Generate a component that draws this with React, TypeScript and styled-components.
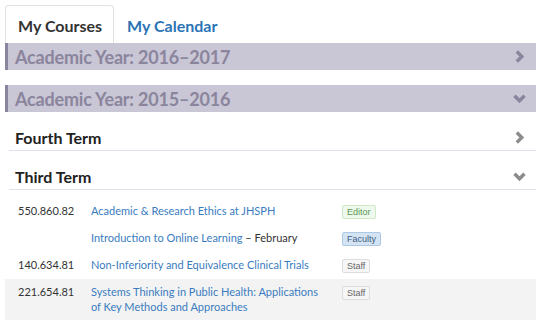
import styled, { createGlobalStyle } from 'styled-components';

const GlobalStyle = createGlobalStyle`
  body {
    margin: 0;
    background: #ffffff;
    font-family: Lato, 'Open Sans', sans-serif;
  }
`;

type Role = 'editor' | 'faculty' | 'staff';

interface Course {
  code?: string;
  title: string;
  note?: string;
  role: Role;
}

const courses: Course[] = [
  { code: '550.860.82', title: 'Academic & Research Ethics at JHSPH', role: 'editor' },
  { title: 'Introduction to Online Learning', note: '– February', role: 'faculty' },
  { code: '140.634.81', title: 'Non-Inferiority and Equivalence Clinical Trials', role: 'staff' },
  {
    code: '221.654.81',
    title: 'Systems Thinking in Public Health: Applications of Key Methods and Approaches',
    role: 'staff',
  },
];

const roleLabel: Record<Role, string> = {
  editor: 'Editor',
  faculty: 'Faculty',
  staff: 'Staff',
};

const Chevron = ({ dir, color }: { dir: 'right' | 'down'; color: string }) => (
  <svg width="13" height="13" viewBox="0 0 13 13">
    {dir === 'right' ? (
      <polyline points="3.8,1.5 8.8,6.5 3.8,11.5" fill="none" stroke={color} strokeWidth="3.4" />
    ) : (
      <polyline points="1.5,3.8 6.5,8.8 11.5,3.8" fill="none" stroke={color} strokeWidth="3.4" />
    )}
  </svg>
);

export default function App() {
  return (
    <>
      <GlobalStyle />
      <Page>
        <Tabs>
          <Tab active>My Courses</Tab>
          <Tab>My Calendar</Tab>
        </Tabs>

        <YearBar>
          <YearTitle>Academic Year: 2016–2017</YearTitle>
          <Chevron dir="right" color="#8a859c" />
        </YearBar>

        <YearBar spaced>
          <YearTitle>Academic Year: 2015–2016</YearTitle>
          <Chevron dir="down" color="#8a859c" />
        </YearBar>

        <TermHeader>
          <TermTitle>Fourth Term</TermTitle>
          <Chevron dir="right" color="#8c8c8c" />
        </TermHeader>

        <TermHeader>
          <TermTitle>Third Term</TermTitle>
          <Chevron dir="down" color="#8c8c8c" />
        </TermHeader>

        <CourseList>
          {courses.map((c, i) => (
            <CourseRow key={i} shaded={i === 3}>
              <Code>{c.code}</Code>
              <Title>
                <CourseLink href="#">{c.title}</CourseLink>
                {c.note ? <Note> {c.note}</Note> : null}
              </Title>
              <div>
                <Badge role={c.role}>{roleLabel[c.role]}</Badge>
              </div>
            </CourseRow>
          ))}
        </CourseList>
      </Page>
    </>
  );
}

const Page = styled.div`
  width: 531px;
  padding: 5px;
`;

const Tabs = styled.div`
  display: flex;
  align-items: flex-end;
  height: 38px;
`;

const Tab = styled.div<{ active?: boolean }>`
  height: 38px;
  box-sizing: border-box;
  display: flex;
  align-items: center;
  padding: 1px 11px 0 12px;
  font-size: 16px;
  font-weight: 700;
  color: ${(p) => (p.active ? '#333333' : '#2a74b5')};
  border: 1px solid ${(p) => (p.active ? '#e2e2e2' : 'transparent')};
  border-bottom: none;
  border-radius: 4px 4px 0 0;
  background: #ffffff;
`;

const YearBar = styled.div<{ spaced?: boolean }>`
  display: flex;
  align-items: center;
  justify-content: space-between;
  height: 27px;
  margin-top: ${(p) => (p.spaced ? '15px' : '0')};
  padding: 0 10px 0 7px;
  background: #c9c6d6;
  border-left: 3px solid #8a859f;
`;

const YearTitle = styled.div`
  font-size: 18px;
  font-weight: 700;
  letter-spacing: -0.2px;
  color: #8a859c;
`;

const TermHeader = styled.div`
  display: flex;
  align-items: center;
  justify-content: space-between;
  height: 26px;
  margin: 12px 0 0 4px;
  padding: 0 10px 0 6px;
  border-bottom: 1px solid #e1e1ec;
`;

const TermTitle = styled.div`
  font-size: 16px;
  font-weight: 700;
  color: #222222;
`;

const CourseList = styled.div`
  margin-top: 8px;
`;

const CourseRow = styled.div<{ shaded?: boolean }>`
  display: grid;
  grid-template-columns: 73px 251px 1fr;
  padding: 5px 0 6px 13px;
  font-size: 11px;
  line-height: 15px;
  background: ${(p) => (p.shaded ? '#f3f3f3' : 'transparent')};
`;

const Code = styled.div`
  color: #333333;
`;

const Title = styled.div`
  padding-right: 12px;
`;

const CourseLink = styled.a`
  color: #3a7cc0;
  text-decoration: none;
`;

const Note = styled.span`
  color: #333333;
`;

const badgeColors: Record<Role, { bg: string; border: string; text: string }> = {
  editor: { bg: '#eef8ec', border: '#cfe8c8', text: '#5b9a52' },
  faculty: { bg: '#d5e4f3', border: '#adc9e6', text: '#3e5d85' },
  staff: { bg: '#f6f6f6', border: '#dddddd', text: '#666666' },
};

const Badge = styled.span<{ role: Role }>`
  display: inline-block;
  font-size: 9px;
  line-height: 12px;
  padding: 0 4px;
  border-radius: 2px;
  background: ${(p) => badgeColors[p.role].bg};
  border: 1px solid ${(p) => badgeColors[p.role].border};
  color: ${(p) => badgeColors[p.role].text};
  font-family: 'Liberation Sans', Arial, sans-serif;
`;
